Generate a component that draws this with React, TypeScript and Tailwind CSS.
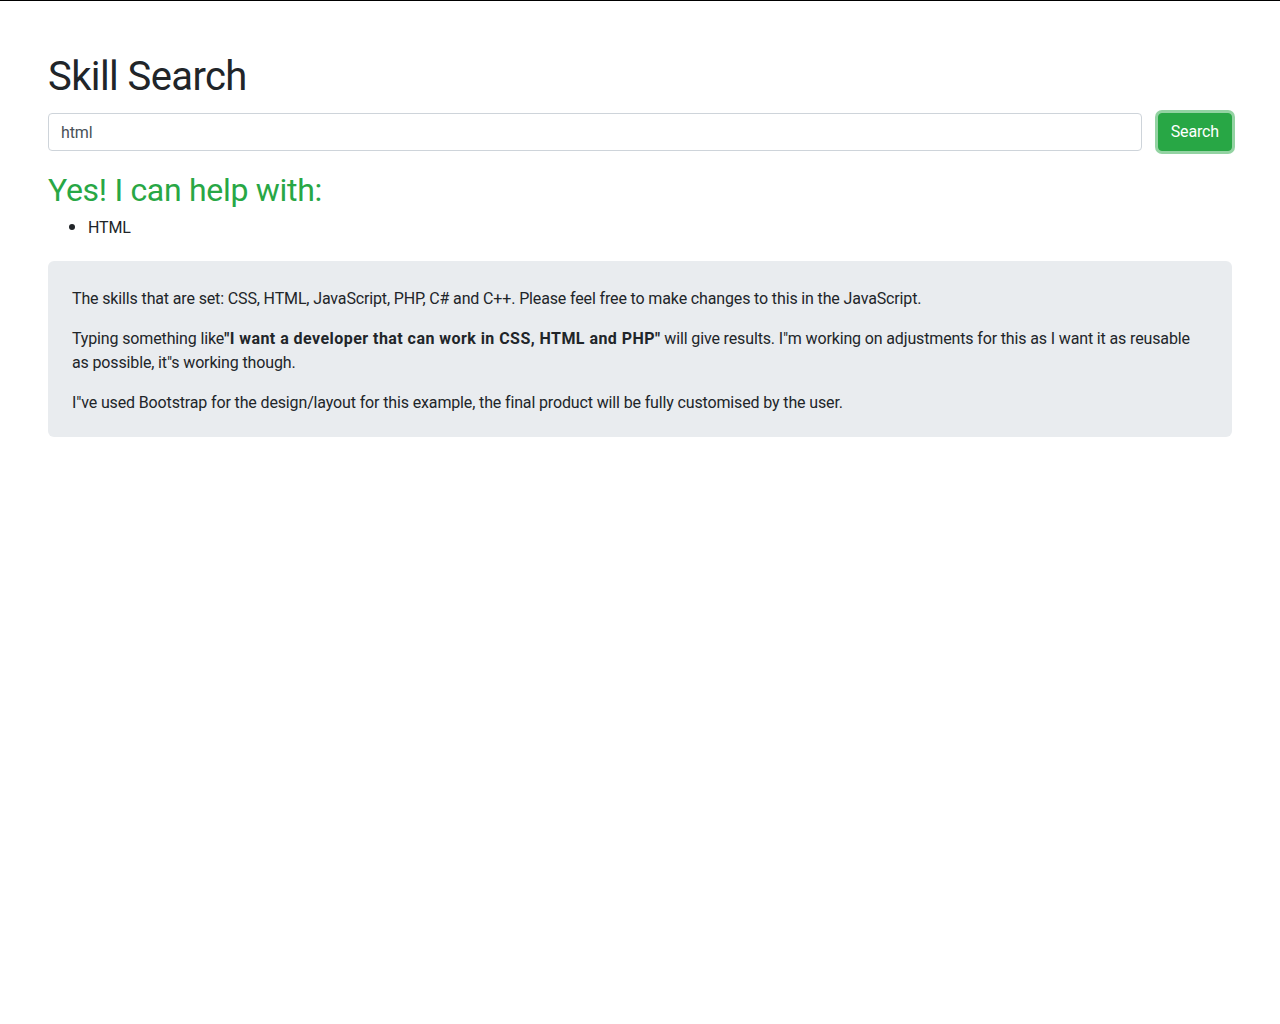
import React, { useState } from 'react';

const SKILLS = ['CSS', 'HTML', 'JavaScript', 'PHP', 'C#', 'C++'];

export default function App() {
  const [query, setQuery] = useState('html');
  const [results, setResults] = useState<string[]>(['HTML']);

  // match any set skill that appears in the typed text
  const runSearch = () => {
    const q = query.toLowerCase();
    setResults(SKILLS.filter(s => q.includes(s.toLowerCase())));
  };

  return (
    <div className="min-h-screen border-t border-black bg-white text-[#212529] font-['Roboto',sans-serif] tracking-[-0.14px]">
      <div className="px-12 pt-[52px]">
        <h1 className="text-[40px] leading-[1.2] font-normal mb-[12px] tracking-[-0.6px]">Skill Search</h1>

        <div className="flex items-center gap-4">
          <input
            value={query}
            onChange={e => setQuery(e.target.value)}
            className="flex-1 h-[38px] px-3 text-base text-[#495057] border border-[#ced4da] rounded bg-white outline-none"
          />
          <button
            onClick={runSearch}
            className="h-[38px] px-3 text-base text-white bg-[#28a745] border border-[#28a745] rounded ring-[3px] ring-[#28a745]/50"
          >
            Search
          </button>
        </div>

        {results.length > 0 && (
          <>
            <h2 className="mt-5 mb-[5px] text-[32px] leading-[1.2] text-[#28a745] tracking-[-0.3px]">Yes! I can help with:</h2>
            <ul className="list-disc pl-10 mb-[21px] text-base leading-6 marker:text-[20px]">
              {results.map(r => (
                <li key={r}>{r}</li>
              ))}
            </ul>
          </>
        )}

        <div className="rounded-md bg-[#e9ecef] px-6 pt-[26px] pb-[22px] text-base leading-6">
          <p className="mb-4">
            The skills that are set: CSS, HTML, JavaScript, PHP, C# and C++. Please feel free to make changes to this in the JavaScript.
          </p>
          <p className="mb-4">
            Typing something like<strong className="font-bold tracking-[0.45px]">"I want a developer that can work in CSS, HTML and PHP"</strong> will give results. I"m working on adjustments for this as I want it as reusable as possible, it"s working though.
          </p>
          <p>I"ve used Bootstrap for the design/layout for this example, the final product will be fully customised by the user.</p>
        </div>
      </div>
    </div>
  );
}
